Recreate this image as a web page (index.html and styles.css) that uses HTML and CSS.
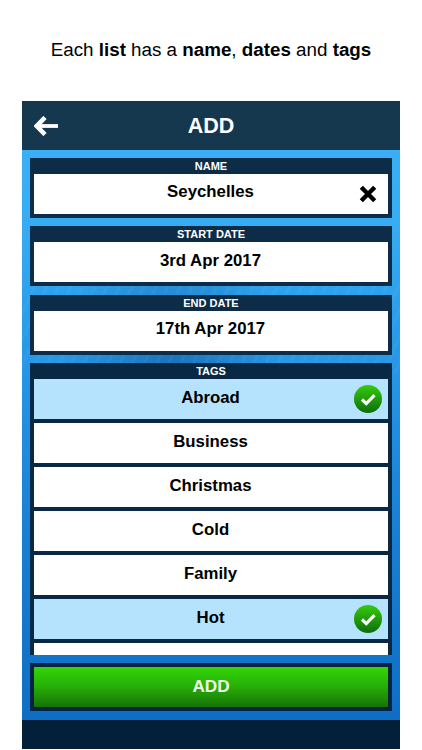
FILE: index.html
```html
<!DOCTYPE html>
<html lang="en">
<head>
<meta charset="utf-8">
<title>Add list</title>
<link rel="stylesheet" href="styles.css">
</head>
<body>
<p class="caption">Each <b>list</b> has a <b>name</b>, <b>dates</b> and <b>tags</b></p>
<main class="phone">
  <header class="topbar">
    <svg class="back" viewBox="0 0 24 20" width="24" height="20" aria-hidden="true"><path d="M11 1.5 L2.8 10 L11 18.5" fill="none" stroke="#fff" stroke-width="4.6"/><path d="M4 10 H24" fill="none" stroke="#fff" stroke-width="3.8"/></svg>
    <h1>ADD</h1>
  </header>
  <div class="content">
    <section class="panel">
      <h2>NAME</h2>
      <div class="row tight">Seychelles
        <svg class="clear" viewBox="0 0 18 18" width="18" height="18" aria-hidden="true"><path d="M2.3 2.3 L15.7 15.7 M15.7 2.3 L2.3 15.7" stroke="#000" stroke-width="4.4"/></svg>
      </div>
    </section>
    <section class="panel">
      <h2>START DATE</h2>
      <div class="row">3rd Apr 2017</div>
    </section>
    <section class="panel">
      <h2>END DATE</h2>
      <div class="row tight">17th Apr 2017</div>
    </section>
    <section class="panel tags">
      <h2>TAGS</h2>
      <div class="list">
        <div class="row on">Abroad
          <svg class="check" viewBox="0 0 28 28" width="28" height="28" aria-hidden="true"><path d="M8 14.5 L12.3 18.6 L20.5 10.2" fill="none" stroke="#fff" stroke-width="3.2"/></svg>
        </div>
        <div class="row">Business</div>
        <div class="row">Christmas</div>
        <div class="row">Cold</div>
        <div class="row">Family</div>
        <div class="row on">Hot
          <svg class="check" viewBox="0 0 28 28" width="28" height="28" aria-hidden="true"><path d="M8 14.5 L12.3 18.6 L20.5 10.2" fill="none" stroke="#fff" stroke-width="3.2"/></svg>
        </div>
        <div class="row"></div>
      </div>
    </section>
    <div class="panel action"><button class="add" type="button">ADD</button></div>
  </div>
  <footer class="bottombar"></footer>
</main>
</body>
</html>
```
FILE: styles.css
```css
* { box-sizing: border-box; }
html, body { margin: 0; padding: 0; }
body {
  width: 422px;
  height: 750px;
  overflow: hidden;
  background: #fff;
  font-family: "Liberation Sans", Arial, sans-serif;
  color: #000;
}
.caption {
  margin: 0;
  height: 101px;
  padding-top: 39px;
  font-size: 18.8px;
  line-height: 22px;
  text-align: center;
}
.phone {
  margin: 0 22px;
  width: 378px;
  height: 648px;
  display: flex;
  flex-direction: column;
  background: linear-gradient(#3cb0f6 0%, #37adf3 18%, #2a9cea 35%, #1a80d4 65%, #0b6cc2 100%);
}
.topbar {
  flex: none;
  height: 49px;
  display: flex;
  align-items: center;
  justify-content: center;
  position: relative;
  background: #15384f;
}
.back { position: absolute; left: 12px; top: 15px; }
.topbar h1 {
  margin: 2px 0 0;
  color: #fff;
  font-size: 21.5px;
  font-weight: 700;
}
.content {
  flex: 1;
  min-height: 0;
  padding: 8px 8px 9px;
  display: flex;
  flex-direction: column;
  gap: 8.4px;
  background:
    repeating-linear-gradient(115deg, rgba(255,255,255,.035) 0 3px, transparent 3px 11px) 0 134px / 100% 90px no-repeat,
    radial-gradient(ellipse 110px 130px at 150px 205px, rgba(6,60,120,.4), transparent);
}
.panel {
  flex: none;
  padding: 0 4px 4px;
  background: #0c2c47;
}
.panel h2 {
  margin: 0;
  height: 16px;
  color: #fff;
  font-size: 11px;
  line-height: 16px;
  font-weight: 700;
  text-align: center;
}
.row {
  position: relative;
  height: 40px;
  display: flex;
  align-items: center;
  justify-content: center;
  padding: 0 1px 2px 0;
  background: #fff;
  font-size: 16.8px;
  font-weight: 700;
}
.row.tight { padding-bottom: 4px; }
.clear { position: absolute; right: 11px; top: 11px; }
.tags {
  flex: 1;
  min-height: 0;
  padding-bottom: 0;
  overflow: hidden;
  background: #082843;
}
.list {
  display: flex;
  flex-direction: column;
  gap: 4px;
}
.row.on { background: #b5e3fe; }
.check {
  position: absolute;
  right: 6px;
  top: 6px;
  border-radius: 50%;
  background: linear-gradient(#33cc0a, #0f6d0c);
}
.action { padding: 4px; background: #062440; }
.add {
  display: block;
  width: 100%;
  height: 40px;
  border: 0;
  padding: 0 0 2px;
  background: linear-gradient(#33d606 0%, #27ad07 50%, #157308 100%);
  color: #f2f7ee;
  font-family: inherit;
  font-size: 17.2px;
  font-weight: 700;
}
.bottombar {
  flex: none;
  height: 29px;
  background: #041f3a;
}
```
